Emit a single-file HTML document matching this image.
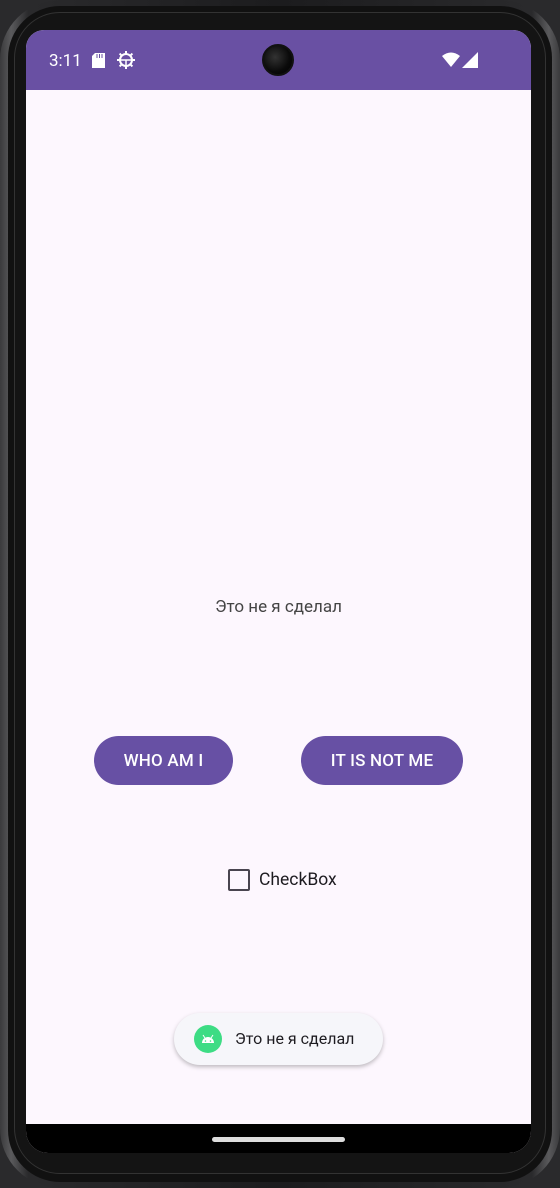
<!DOCTYPE html>
<html><head><meta charset="utf-8"><style>
*{margin:0;padding:0;box-sizing:border-box}
html,body{width:560px;height:1188px;overflow:hidden;background:#2a2a2c}
body{position:relative;font-family:"Roboto","Liberation Sans","DejaVu Sans",sans-serif}
.frame{position:absolute;left:0;top:0;width:560px;height:1188px;border-radius:60px;background:linear-gradient(90deg,#3a3a3c,#5a5a5c 2%,#2a2a2c 5%,#1c1c1e 50%,#2a2a2c 95%,#5a5a5c 98%,#3a3a3c);}
.bez{position:absolute;left:8px;top:6px;width:544px;height:1176px;border-radius:52px;background:#111;}
.inner{position:absolute;left:14px;top:12px;width:532px;height:1162px;border-radius:46px;background:#141414;border:1px solid #333}
.screen{position:absolute;left:26px;top:30px;width:505px;height:1123px;border-radius:18px 18px 22px 22px;overflow:hidden;background:#fdf7fe}
.sb{position:absolute;left:0;top:0;width:505px;height:60px;background:#6950a3;color:#fff}
.time{position:absolute;left:23px;top:21px;font-size:17px}
.nav{position:absolute;left:0;bottom:0;width:505px;height:29px;background:#000}
.pill{position:absolute;left:186px;top:13px;width:133px;height:5px;border-radius:3px;background:#ddd}
.cam{position:absolute;left:236px;top:14px;width:32px;height:32px;border-radius:50%;background:radial-gradient(circle at 40% 40%,#333,#0a0a0a 60%,#000);border:2px solid #111}
.t{position:absolute;left:0;width:505px;text-align:center;font-size:17px;color:#444}
.btn{position:absolute;top:706px;height:49px;border-radius:25px;background:#6750a4;color:#fff;font-size:17px;font-weight:500;display:flex;align-items:center;justify-content:center;letter-spacing:0.2px}
.cb{position:absolute;left:202px;top:839px;width:22px;height:22px;border:2px solid #49454f;border-radius:2px}
.cbl{position:absolute;left:233px;top:840px;font-size:17.5px;color:#1d1b20}
.toast{position:absolute;left:148px;top:983px;width:209px;height:52px;border-radius:26px;background:#f6f6fa;box-shadow:0 2px 4px rgba(0,0,0,.25)}
.ic{position:absolute;left:20px;top:12px;width:28px;height:28px;border-radius:50%;background:#3ddc84;overflow:hidden}
.tt{position:absolute;left:61px;top:16px;font-size:16px;color:#1d1b20}
</style></head><body>
<div class="frame"></div><div class="bez"></div><div class="inner"></div>
<div class="screen">
 <div class="sb">
  <div class="time">3:11</div>
  <svg style="position:absolute;left:66px;top:23px" width="13" height="15" viewBox="0 0 13 15"><path d="M3 0H13V15H0V3Z" fill="#fff"/><path d="M5 1v4M7.5 1v4M10 1v4" stroke="#6950a3" stroke-width="1"/></svg>
  <svg style="position:absolute;left:91px;top:21px" width="18" height="18" viewBox="0 0 18 18"><circle cx="9" cy="9" r="6" fill="none" stroke="#fff" stroke-width="2"/><path d="M9 0v3M9 15v3M0 9h3M15 9h3M2.6 2.6l2 2M13.4 13.4l2 2M2.6 15.4l2-2M13.4 4.6l2-2" stroke="#fff" stroke-width="2"/><path d="M4 9h10M9 9v5" stroke="#fff" stroke-width="1.5"/></svg>
  <div class="cam"></div>
  <svg style="position:absolute;left:416px;top:22px" width="18" height="16" viewBox="0 0 18 16"><path d="M0 4Q9-3 18 4L9 15Z" fill="#fff"/></svg>
  <svg style="position:absolute;left:436px;top:22px" width="16" height="16" viewBox="0 0 16 16"><path d="M16 0V16H0Z" fill="#fff"/></svg>
 </div>
 <div class="t" style="top:567px">Это не я сделал</div>
 <div class="btn" style="left:68px;width:139px">WHO AM I</div>
 <div class="btn" style="left:275px;width:162px">IT IS NOT ME</div>
 <div class="cb"></div><div class="cbl">CheckBox</div>
 <div class="toast"><div class="ic"><svg width="28" height="28" viewBox="0 0 28 28"><path d="M8 18a6 6 0 0 1 12 0Z" fill="#fff"/><path d="M9 10l2 3M19 10l-2 3" stroke="#fff" stroke-width="1"/><circle cx="11.5" cy="16" r=".8" fill="#3ddc84"/><circle cx="16.5" cy="16" r=".8" fill="#3ddc84"/></svg></div><div class="tt">Это не я сделал</div></div>
 <div class="nav"><div class="pill"></div></div>
</div>
</body></html>
